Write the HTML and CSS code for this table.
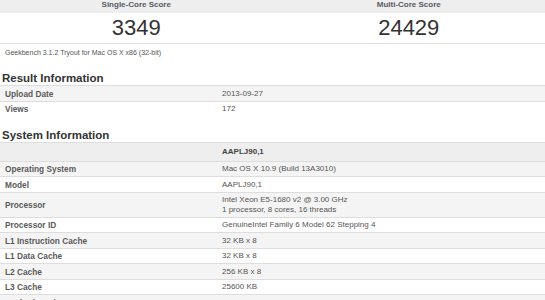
FILE: index.html
```html
<!DOCTYPE html>
<html lang="en">
  <head>
    <meta charset="UTF-8" />
    <title>Geekbench Result</title>
    <link rel="stylesheet" href="styles.css">
  </head>
  <body>
    <div class="scores">
      <div class="score">
        <div class="score-title">Single-Core Score</div>
        <div class="score-value">3349</div>
      </div>
      <div class="score">
        <div class="score-title">Multi-Core Score</div>
        <div class="score-value">24429</div>
      </div>
    </div>
    <p class="version">Geekbench 3.1.2 Tryout for Mac OS X x86 (32-bit)</p>

    <h2 class="section-title result-title">Result Information</h2>
    <table class="info-table">
      <tbody>
        <tr><td class="name">Upload Date</td><td class="value">2013-09-27</td></tr>
        <tr><td class="name">Views</td><td class="value">172</td></tr>
      </tbody>
    </table>

    <h2 class="section-title">System Information</h2>
    <table class="info-table system-table">
      <thead>
        <tr><th></th><th>AAPLJ90,1</th></tr>
      </thead>
      <tbody>
        <tr><td class="name">Operating System</td><td class="value">Mac OS X 10.9 (Build 13A3010)</td></tr>
        <tr><td class="name">Model</td><td class="value">AAPLJ90,1</td></tr>
        <tr><td class="name">Processor</td><td class="value">Intel Xeon E5-1680 v2 @ 3.00 GHz<br />1 processor, 8 cores, 16 threads</td></tr>
        <tr><td class="name">Processor ID</td><td class="value">GenuineIntel Family 6 Model 62 Stepping 4</td></tr>
        <tr><td class="name">L1 Instruction Cache</td><td class="value">32 KB x 8</td></tr>
        <tr><td class="name">L1 Data Cache</td><td class="value">32 KB x 8</td></tr>
        <tr><td class="name">L2 Cache</td><td class="value">256 KB x 8</td></tr>
        <tr><td class="name">L3 Cache</td><td class="value">25600 KB</td></tr>
        <tr><td class="name">Motherboard</td><td class="value">Apple Inc. Mac-F60DEB81FF30ACF6 AAPLJ90,1</td></tr>
      </tbody>
    </table>
  </body>
</html>
```

FILE: styles.css
```css
:root {
  --text-color: #333333;
  --text-light: #555555;
  --stripe: #f4f4f4;
  --head-bg: #eeeeee;
  --border-color: #dddddd;
}

* {
  margin: 0;
  padding: 0;
  box-sizing: border-box;
}

body {
  font-family: "Liberation Sans", Arial, sans-serif;
  color: var(--text-color);
  background-color: white;
  font-size: 7px;
  line-height: 1.2;
}

.scores {
  display: grid;
  grid-template-columns: 1fr 1fr;
  border-bottom: 1px solid var(--border-color);
  margin-top: -4px;
}

.score {
  text-align: center;
}

.score-title {
  background-color: var(--head-bg);
  color: #555a66;
  font-weight: bold;
  font-size: 8px;
  height: 17px;
  padding-top: 4px;
}

.score-value {
  font-size: 22px;
  height: 30px;
  padding-top: 3px;
  line-height: 24px;
}

.version {
  color: var(--text-light);
  font-size: 7px;
  padding: 5px 5px 0;
}

.section-title {
  font-size: 11.5px;
  font-weight: bold;
  color: #333;
  padding: 0 2px;
  line-height: 14px;
}

.result-title {
  margin-top: 14px;
}

.info-table {
  width: 100%;
  border-collapse: collapse;
  font-size: 8px;
}

.info-table + .section-title {
  margin-top: 11px;
}

.info-table td,
.info-table th {
  border-top: 1px solid var(--border-color);
  text-align: left;
  vertical-align: middle;
  padding: 2px 5px;
  height: 15.5px;
  line-height: 10px;
}

.info-table tbody tr:nth-child(odd) {
  background-color: var(--stripe);
}

.info-table th {
  background-color: var(--head-bg);
  font-weight: bold;
  height: 19px;
  color: #444;
}

.name {
  width: 217px;
  font-weight: bold;
  font-size: 8.3px;
  color: #5a5a5a;
}

.value {
  color: var(--text-light);
}
```
